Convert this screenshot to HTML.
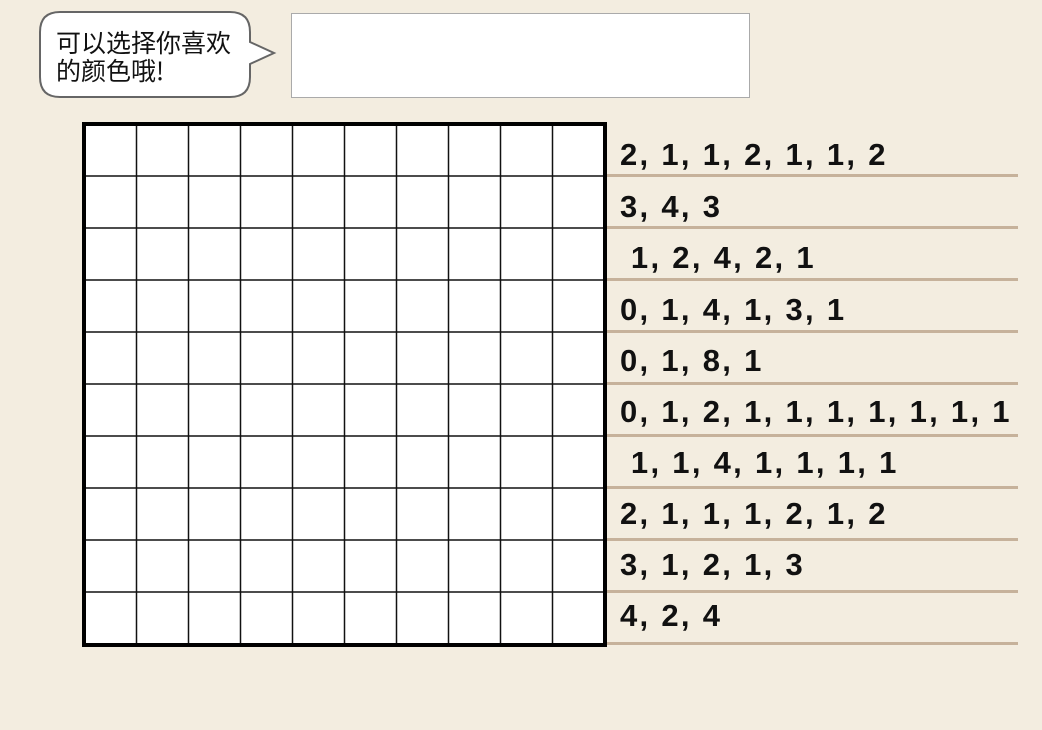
<!DOCTYPE html>
<html><head><meta charset="utf-8"><style>
body{margin:0;width:1042px;height:730px;background:#f3ede0;position:relative;overflow:hidden;font-family:"Liberation Sans","Noto Sans CJK SC",sans-serif}
.row{position:absolute;left:620px;font-weight:bold;font-size:31px;color:#111;letter-spacing:2.3px;word-spacing:0px}
.ln{position:absolute;left:607px;width:411px;height:3px;background:#c6b29b}
</style></head><body>
<svg width="1042" height="730" style="position:absolute;left:0;top:0">
<path d="M60 12 H230 Q250 12 250 32 V42 L274 53 L250 64 V77 Q250 97 230 97 H60 Q40 97 40 77 V32 Q40 12 60 12 Z" fill="#fff" stroke="#666" stroke-width="2"/>
<rect x="291.5" y="13.5" width="458" height="84" fill="#fff" stroke="#aaa" stroke-width="1"/>
<rect x="84" y="124" width="521" height="521" fill="#fff"/>
<g stroke="#111" stroke-width="1.5">
<line x1="136.5" y1="124" x2="136.5" y2="645"/><line x1="188.5" y1="124" x2="188.5" y2="645"/><line x1="240.5" y1="124" x2="240.5" y2="645"/><line x1="292.5" y1="124" x2="292.5" y2="645"/><line x1="344.5" y1="124" x2="344.5" y2="645"/><line x1="396.5" y1="124" x2="396.5" y2="645"/><line x1="448.5" y1="124" x2="448.5" y2="645"/><line x1="500.5" y1="124" x2="500.5" y2="645"/><line x1="552.5" y1="124" x2="552.5" y2="645"/>
<line y1="176" x1="84" y2="176" x2="605"/><line y1="228" x1="84" y2="228" x2="605"/><line y1="280" x1="84" y2="280" x2="605"/><line y1="332" x1="84" y2="332" x2="605"/><line y1="384" x1="84" y2="384" x2="605"/><line y1="436" x1="84" y2="436" x2="605"/><line y1="488" x1="84" y2="488" x2="605"/><line y1="540" x1="84" y2="540" x2="605"/><line y1="592" x1="84" y2="592" x2="605"/>
</g>
<rect x="84" y="124" width="521" height="521" fill="none" stroke="#000" stroke-width="4"/>
<text x="56" y="52" font-size="25" fill="#111" font-family="Noto Sans CJK SC, sans-serif">可以选择你喜欢</text>
<text x="56" y="80" font-size="25" fill="#111" font-family="Noto Sans CJK SC, sans-serif">的颜色哦!</text>
</svg>
<div class="ln" style="top:174px"></div><div class="ln" style="top:226px"></div><div class="ln" style="top:278px"></div><div class="ln" style="top:330px"></div><div class="ln" style="top:382px"></div><div class="ln" style="top:434px"></div><div class="ln" style="top:486px"></div><div class="ln" style="top:538px"></div><div class="ln" style="top:590px"></div><div class="ln" style="top:642px"></div>
<div class="row" style="top:137px">2, 1, 1, 2, 1, 1, 2</div>
<div class="row" style="top:189px">3, 4, 3</div>
<div class="row" style="top:240px">&nbsp;1, 2, 4, 2, 1</div>
<div class="row" style="top:292px">0, 1, 4, 1, 3, 1</div>
<div class="row" style="top:343px">0, 1, 8, 1</div>
<div class="row" style="top:394px">0, 1, 2, 1, 1, 1, 1, 1, 1, 1</div>
<div class="row" style="top:445px">&nbsp;1, 1, 4, 1, 1, 1, 1</div>
<div class="row" style="top:496px">2, 1, 1, 1, 2, 1, 2</div>
<div class="row" style="top:547px">3, 1, 2, 1, 3</div>
<div class="row" style="top:598px">4, 2, 4</div>
</body></html>
